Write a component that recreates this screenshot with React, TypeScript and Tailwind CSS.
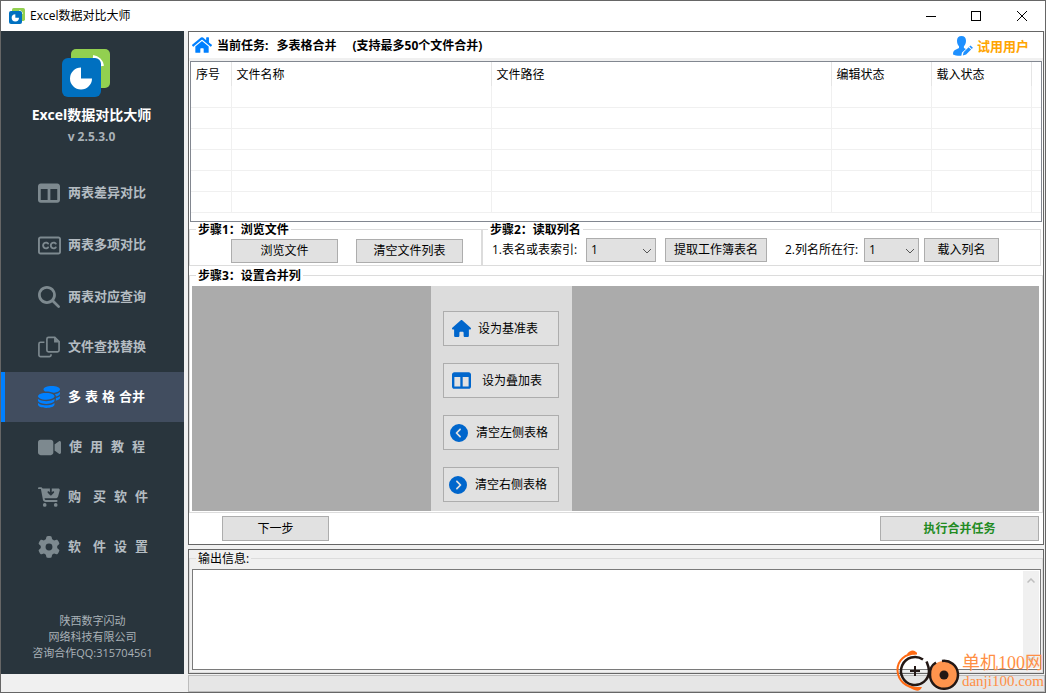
import type { ReactNode } from 'react';
import { FaHome } from 'react-icons/fa';
import {
  FaCartArrowDown,
  FaCircleChevronLeft,
  FaCircleChevronRight,
  FaCoins,
  FaGear,
  FaHouse,
  FaMagnifyingGlass,
  FaRegClosedCaptioning,
  FaTableColumns,
  FaVideo,
} from 'react-icons/fa6';
import { clsx } from 'clsx';

function Logo({ className }: { className?: string }) {
  return (
    <svg viewBox="0 0 48 48" className={className} aria-hidden="true">
      <rect x="9" y="0" width="39" height="39" rx="5" fill="#92d050" />
      <path d="M31 7.5A11 11 0 0 1 40.5 17" fill="none" stroke="#fff" strokeWidth="3" />
      <rect x="0" y="9" width="39" height="39" rx="6" fill="#0070c0" />
      <path d="M19 18.5A11 11 0 1 0 30 29.5H19Z" fill="#fff" />
    </svg>
  );
}

function CopyIcon({ className }: { className?: string }) {
  return (
    <svg viewBox="0 0 24 24" className={className} fill="none" stroke="currentColor" strokeWidth="1.8" aria-hidden="true">
      <path d="M11.5 1.5h6.8L23 6.2v9.3a1.8 1.8 0 0 1-1.8 1.8h-9.7a1.8 1.8 0 0 1-1.8-1.8V3.3a1.8 1.8 0 0 1 1.8-1.8Z" />
      <path d="M17.5 1.5V7H23Z" fill="currentColor" stroke="none" />
      <path d="M7 6.8H2.8A1.8 1.8 0 0 0 1 8.6v12.1a1.8 1.8 0 0 0 1.8 1.8h9.6a1.8 1.8 0 0 0 1.8-1.8V20" />
    </svg>
  );
}

function UserEditIcon({ className }: { className?: string }) {
  return (
    <svg viewBox="0 0 20 20" className={className} fill="currentColor" aria-hidden="true">
      <path d="M8.5 0C11.4 0 13 2 13 4.8c0 2.4-.9 4.3-2.1 5.4v1.7l2 1L9 16.5 8.3 19.8C5 20 1.8 19.5 0 18.6c0-3 .8-4 3-5l3-1.5v-1.9C4.8 9 4 7.2 4 4.8 4 2 5.6 0 8.5 0Z" />
      <path d="M9.8 19.4l.8-3.2 5-5 2.5 2.4-5 5ZM16.3 10.5l1.2-1.1 2.4 2.4-1.1 1.2Z" />
    </svg>
  );
}

type NavItem = { label: string[]; icon: ReactNode; spacing?: string; active?: boolean };

const compareItems: NavItem[] = [
  { label: ['两表差异对比'], icon: <FaTableColumns size={22} /> },
  { label: ['两表多项对比'], icon: <FaRegClosedCaptioning size={23} /> },
  { label: ['两表对应查询'], icon: <FaMagnifyingGlass size={22} /> },
];

const toolItems: NavItem[] = [
  { label: ['文件查找替换'], icon: <CopyIcon className="size-[22px]" /> },
  { label: ['多', '表', '格', '合并'], icon: <FaCoins size={22} />, spacing: 'gap-1', active: true },
  { label: ['使', '用', '教', '程'], icon: <FaVideo size={23} />, spacing: 'gap-2 pl-px' },
  { label: ['购', '买', '软', '件'], icon: <FaCartArrowDown size={22} />, spacing: 'gap-2 [&>:first-child]:mr-1' },
  { label: ['软', '件', '设', '置'], icon: <FaGear size={22} />, spacing: 'gap-2 [&>:first-child]:mr-1' },
];

const columns = [
  { label: '序号', width: 'w-10' },
  { label: '文件名称', width: 'w-[260px]' },
  { label: '文件路径', width: '' },
  { label: '编辑状态', width: 'w-[100px]' },
  { label: '载入状态', width: 'w-[100px]' },
];

function NavLink({ item }: { item: NavItem }) {
  return (
    <a
      href="#"
      className={clsx(
        'flex h-[50px] items-center border-l-4 pl-8 text-[13px] font-bold',
        item.active ? 'border-[#0080ff] bg-[#414d5f] text-white' : 'border-transparent text-[#b4bcc2]',
      )}
    >
      <span className={clsx('flex w-6 justify-center', item.active ? 'text-[#0080ff]' : 'text-[#7d898f]')}>
        {item.icon}
      </span>
      <span className={clsx('ml-[7px] flex', item.spacing)}>
        {item.label.map((part) => (
          <span key={part}>{part}</span>
        ))}
      </span>
    </a>
  );
}

function Sidebar() {
  return (
    <aside className="flex w-[183px] shrink-0 flex-col bg-[#29353d]">
      <div className="flex flex-col items-center pt-[18px] pr-[2px]">
        <Logo className="mr-3 size-12" />
        <h1 className="mt-2 text-sm leading-5 font-bold text-white">Excel数据对比大师</h1>
        <p className="mt-1 text-xs leading-4 font-bold text-[#a9b2b8]">v 2.5.3.0</p>
      </div>
      <nav className="mt-[23px]">
        <div className="flex flex-col gap-[2px]">
          {compareItems.map((item) => (
            <NavLink key={item.label[0]} item={item} />
          ))}
        </div>
        {toolItems.map((item) => (
          <NavLink key={item.label[0]} item={item} />
        ))}
      </nav>
      <p className="mt-auto pt-4 pb-[13px] text-center text-[11px] leading-4 text-[#a9b2b8]">
        陕西数字闪动
        <br />
        网络科技有限公司
        <br />
        咨询合作QQ:315704561
      </p>
    </aside>
  );
}

function Button({ className, children }: { className?: string; children: ReactNode }) {
  return (
    <button
      type="button"
      className={clsx('flex shrink-0 items-center border border-[#adadad] bg-[#e1e1e1] pt-px text-xs', className)}
    >
      {children}
    </button>
  );
}

function Select({ id, className }: { id: string; className: string }) {
  return (
    <div className={clsx('relative shrink-0', className)}>
      <select id={id} className="h-6 w-full appearance-none border border-[#adadad] bg-[#e1e1e1] px-1 text-xs">
        <option>1</option>
      </select>
      <svg
        viewBox="0 0 10 6"
        className="pointer-events-none absolute top-[10px] right-1 w-[10px]"
        fill="none"
        stroke="#555"
        aria-hidden="true"
      >
        <path d="M1 1l4 4 4-4" />
      </svg>
    </div>
  );
}

function FileTable() {
  return (
    <div className="mx-px border border-[#828790] bg-white pb-2">
      <table className="w-full table-fixed border-collapse">
        <thead>
          <tr className="h-6">
            {columns.map((col) => (
              <th
                key={col.label}
                className={clsx('border-r border-[#e5e5e5] px-[5px] pt-px text-left text-xs font-normal', col.width)}
              >
                {col.label}
              </th>
            ))}
            <th className="w-[10px]" />
          </tr>
        </thead>
        <tbody>
          {Array.from({ length: 6 }, (_, row) => (
            <tr key={row} className="h-[21px] border-b border-[#f0f0f0]">
              {columns.map((col) => (
                <td key={col.label} className="border-r border-[#f0f0f0]" />
              ))}
              <td />
            </tr>
          ))}
        </tbody>
      </table>
    </div>
  );
}

function MergeColumns() {
  return (
    <fieldset className="mt-[2px] min-w-0 border border-[#dcdcdc] pt-[2px] pr-[3px] pb-px pl-[2px]">
      <legend className="ml-1 px-[2px] text-xs leading-4 font-bold">步骤3：设置合并列</legend>
      <div className="flex bg-[#ababab]">
        <div className="w-[239px] shrink-0" />
        <div className="flex w-[141px] shrink-0 flex-col gap-[17px] bg-[#dcdcdc] pt-[25px] pr-[13px] pb-[9px] pl-3">
          <Button className="h-[35px] gap-[7px] pl-2">
            <FaHouse size={19} className="text-[#0066cc]" />
            设为基准表
          </Button>
          <Button className="h-[35px] gap-[11px] pl-2">
            <FaTableColumns size={19} className="text-[#0066cc]" />
            设为叠加表
          </Button>
          <Button className="h-[35px] gap-2 pl-[6px]">
            <FaCircleChevronLeft size={18} className="text-[#0066cc]" />
            清空左侧表格
          </Button>
          <Button className="h-[35px] gap-2 pl-[5px]">
            <FaCircleChevronRight size={18} className="text-[#0066cc]" />
            清空右侧表格
          </Button>
        </div>
      </div>
    </fieldset>
  );
}

function TaskPanel() {
  return (
    <section className="border border-[#666] bg-white">
      <header className="flex h-[26px] items-center pr-[14px] pl-[3px] text-xs font-bold">
        <FaHome size={20} className="text-[#0080ff]" />
        <h2 className="ml-[5px] flex pt-[2px]">
          <span>当前任务:</span>
          <span className="ml-2">多表格合并</span>
          <span className="ml-4">(支持最多50个文件合并)</span>
        </h2>
        <a href="#" className="ml-auto flex items-center gap-1 pt-px text-[13px] leading-5 text-[#ffa500]">
          <UserEditIcon className="size-5 text-[#1e90ff]" />
          试用用户
        </a>
      </header>
      <div className="h-[3px] bg-[#f0f0f0]" />
      <FileTable />

      <div className="mr-[2px] flex">
        <fieldset className="w-[293px] shrink-0 border border-[#dcdcdc] pb-[2px]">
          <legend className="ml-[6px] px-[2px] text-xs leading-4 font-bold">步骤1：浏览文件</legend>
          <div className="flex gap-[18px] pt-px pl-[41px]">
            <Button className="h-6 w-[107px] justify-center">浏览文件</Button>
            <Button className="h-6 w-[107px] justify-center">清空文件列表</Button>
          </div>
        </fieldset>
        <fieldset className="min-w-0 flex-1 border border-[#dcdcdc] pb-[3px]">
          <legend className="ml-[5px] px-[2px] text-xs leading-4 font-bold">步骤2：读取列名</legend>
          <div className="flex items-center pl-[9px] text-xs">
            <label htmlFor="sheet" className="w-[94px] shrink-0">
              1.表名或表索引:
            </label>
            <Select id="sheet" className="w-[70px]" />
            <Button className="ml-[9px] h-6 w-[102px] justify-center">提取工作簿表名</Button>
            <label htmlFor="header-row" className="ml-[18px] w-[79px] shrink-0">
              2.列名所在行:
            </label>
            <Select id="header-row" className="w-[55px]" />
            <Button className="ml-[5px] h-6 w-[75px] justify-center">载入列名</Button>
          </div>
        </fieldset>
      </div>

      <MergeColumns />

      <div className="flex justify-between py-[3px] pr-1 pl-[33px]">
        <Button className="h-[25px] w-[107px] justify-center">下一步</Button>
        <Button className="h-[25px] w-[159px] justify-center font-bold text-[#228b22]">执行合并任务</Button>
      </div>
    </section>
  );
}

function OutputPanel() {
  return (
    <section className="flex flex-1 flex-col border border-[#666] bg-[#f0f0f0] pt-px">
      <fieldset className="flex flex-1 flex-col border border-[#dcdcdc] pt-[2px] pr-px pb-[2px] pl-[2px]">
        <legend className="ml-1 px-[2px] text-xs leading-4">
          <label htmlFor="output">输出信息:</label>
        </legend>
        <div className="flex h-full min-h-[98px] border border-[#7a7a7a] bg-white">
          <textarea id="output" className="flex-1 resize-none px-1 text-xs outline-none" />
          <div className="m-px flex w-4 flex-col items-center justify-between bg-[#f0f0f0] py-[7px]">
            <svg viewBox="0 0 8 5" className="w-2" fill="none" stroke="#bfbfbf" strokeWidth="1.5" aria-hidden="true">
              <path d="M.5 4.5L4 1l3.5 3.5" />
            </svg>
            <svg viewBox="0 0 8 5" className="w-2" fill="none" stroke="#bfbfbf" strokeWidth="1.5" aria-hidden="true">
              <path d="M.5.5L4 4 7.5.5" />
            </svg>
          </div>
        </div>
      </fieldset>
    </section>
  );
}

function TitleBar() {
  return (
    <div className="flex h-[30px] items-center bg-white pl-2 text-xs">
      <Logo className="size-4" />
      <span className="ml-[5px]">Excel数据对比大师</span>
      <div className="ml-auto flex h-full text-black">
        <button type="button" aria-label="最小化" className="flex w-[45px] items-center justify-center">
          <span className="h-px w-[10px] bg-current" />
        </button>
        <button type="button" aria-label="最大化" className="flex w-[46px] items-center justify-center">
          <span className="size-[10px] border border-current" />
        </button>
        <button type="button" aria-label="关闭" className="flex w-[46px] items-center justify-center">
          <svg viewBox="0 0 10 10" className="size-[10px]" stroke="currentColor" aria-hidden="true">
            <path d="M0 0l10 10M10 0L0 10" />
          </svg>
        </button>
      </div>
    </div>
  );
}

function Watermark() {
  return (
    <div className="pointer-events-none absolute right-px bottom-0 flex items-center text-[#ff8f45]">
      <svg viewBox="0 0 64 42" className="h-[42px] w-16" fill="none" aria-hidden="true">
        <path d="M21 3.5C9 3 1 11 1.5 20.5 2 30 9 38 24 38.5" stroke="#ff6a13" strokeWidth="2" />
        <path d="M11 4c3-4 8-5 10 0-3 1-6 0-10 0ZM12 36c4 1 8 1 14 1-2 5-7 5-14-1Z" fill="#ff6a13" />
        <path d="M27 9.500A14 14 0 1 0 33 21C33 17 31.500 14 30.500 11.500" stroke="#231815" strokeWidth="2.500" />
        <path d="M14 21h10M19 16v10" stroke="#231815" strokeWidth="2" />
        <circle cx="48" cy="25" r="14" fill="#ff944d" />
        <path d="M40 12.500C36 15 33.500 20 34 25a14 14 0 1 0 12-14" stroke="#231815" strokeWidth="2.500" />
        <circle cx="48" cy="25" r="4.500" fill="#231815" />
      </svg>
      <div className="ml-[2px] font-['Liberation_Serif','Noto_Sans_CJK_SC',serif]">
        <div className="text-lg leading-5">单机100网</div>
        <div className="text-[15px] leading-4">danji100.com</div>
      </div>
    </div>
  );
}

export default function App() {
  return (
    <div className="relative flex min-h-screen flex-col border border-[#666] bg-[#f0f0f0] font-['Open_Sans','Noto_Sans_CJK_SC',sans-serif] text-black">
      <TitleBar />
      <div className="flex flex-1">
        <Sidebar />
        <main className="mr-px ml-1 flex min-w-0 flex-1 flex-col gap-1">
          <TaskPanel />
          <OutputPanel />
        </main>
      </div>
      <footer className="mt-px ml-[187px] h-[17px] border border-[#bcbcbc] bg-[#e6e6e6]" />
      <Watermark />
    </div>
  );
}
